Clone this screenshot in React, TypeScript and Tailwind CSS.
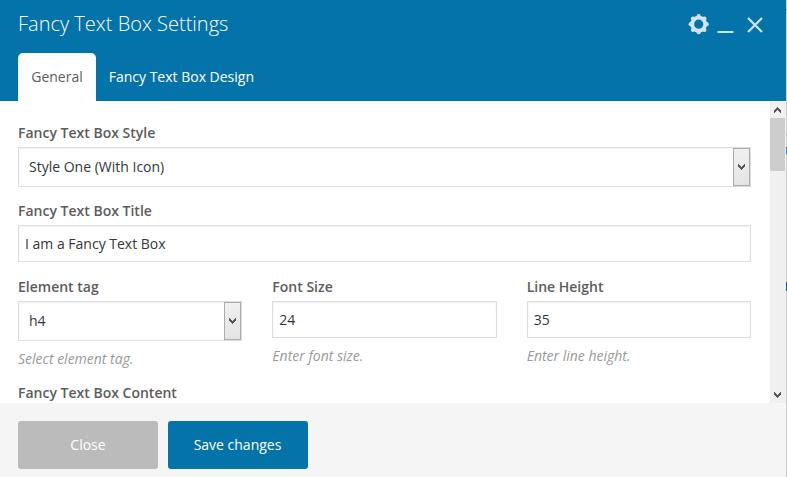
import type { ReactNode } from "react";

function Chevron({ up = false }: { up?: boolean }) {
  return (
    <svg width="7" height="6" viewBox="0 0 7 6" className={up ? "rotate-180" : ""} fill="#585858" shapeRendering="crispEdges">
      <path d="M0 0h1v1h1v1h1v1h1V2h1V1h1V0h1v3H6v1H5v1H4v1H3V5H2V4H1V3H0z" />
    </svg>
  );
}

function Label({ children }: { children: ReactNode }) {
  return <div className="h-[25px] whitespace-nowrap leading-[22px] font-semibold text-[#5c5c5c]">{children}</div>;
}

function Select({ value }: { value: string }) {
  return (
    <div className="flex h-10 items-stretch justify-between border border-[#dddddd] bg-white shadow-[inset_0_1px_2px_rgba(0,0,0,0.07)]">
      <span className="pl-[10px] leading-[38px] text-[#32373c]">{value}</span>
      <span className="flex w-[17px] items-center justify-center border border-[#acacac] bg-linear-to-b from-[#f0f0f0] to-[#e4e4e4]">
        <Chevron />
      </span>
    </div>
  );
}

function Input({ value }: { value: string }) {
  return (
    <div className="h-[37px] border border-[#dddddd] bg-white pl-[6px] leading-[36px] text-[#32373c] shadow-[inset_0_1px_2px_rgba(0,0,0,0.07)]">
      {value}
    </div>
  );
}

function Hint({ children }: { children: ReactNode }) {
  return <div className="mt-[7px] leading-[22px] text-[#999999] italic">{children}</div>;
}

export default function App() {
  return (
    <div className="flex h-[477px] w-[787px] overflow-hidden bg-white font-['Open_Sans',sans-serif] text-[14px]">
      <div className="flex w-[786px] flex-col">
        <header className="flex h-[101px] flex-col justify-between bg-[#0473aa] pl-[18px] text-white">
          <div className="flex h-[48px] justify-between pr-[22px]">
            <h1 className="text-[20px] leading-[48px] font-light">Fancy Text Box Settings</h1>
            <svg width="76" height="22" viewBox="0 0 76 22" className="mt-[13px]" fill="none" stroke="#d0e5f0">
              <circle cx="10.700" cy="11.200" r="6.500" strokeWidth="3.800" />
              <g stroke="none" fill="#d0e5f0">
                <circle cx="10.700" cy="3.200" r="2.100" />
                <circle cx="16.400" cy="5.500" r="2.100" />
                <circle cx="18.700" cy="11.200" r="2.100" />
                <circle cx="16.400" cy="16.900" r="2.100" />
                <circle cx="10.700" cy="19.200" r="2.100" />
                <circle cx="5" cy="16.900" r="2.100" />
                <circle cx="2.700" cy="11.200" r="2.100" />
                <circle cx="5" cy="5.500" r="2.100" />
              </g>
              <path d="M29.500 19h16" strokeWidth="2" />
              <path d="M60 5l14 14M74 5L60 19" strokeWidth="2.200" />
            </svg>
          </div>
          <nav className="flex h-[48px] leading-[48px]">
            <span className="w-[78px] rounded-t-[5px] bg-white text-center text-[#5c5c5c]">General</span>
            <span className="pl-[12.7px]">Fancy Text Box Design</span>
          </nav>
        </header>
        <div className="flex h-[302px] overflow-hidden">
          <main className="w-[770px] pt-[21px] pr-[19px] pl-[18px]">
            <Label>Fancy Text Box Style</Label>
            <Select value="Style One (With Icon)" />
            <div className="mt-[13px]">
              <Label>Fancy Text Box Title</Label>
              <Input value="I am a Fancy Text Box" />
            </div>
            <div className="mt-[14px] grid grid-cols-3 gap-[30px]">
              <div>
                <Label>Element tag</Label>
                <Select value="h4" />
                <Hint>Select element tag.</Hint>
              </div>
              <div>
                <Label>Font Size</Label>
                <Input value="24" />
                <Hint>Enter font size.</Hint>
              </div>
              <div>
                <Label>Line Height</Label>
                <Input value="35" />
                <Hint>Enter line height.</Hint>
              </div>
            </div>
            <div className="mt-[12px]">
              <Label>Fancy Text Box Content</Label>
            </div>
          </main>
          <div className="flex w-4 flex-col bg-[#f0f0f0] pr-px">
            <div className="flex h-[17px] items-center justify-center pt-px">
              <Chevron up />
            </div>
            <div className="h-[53px] bg-[#cdcdcd]" />
            <div className="mt-auto flex h-4 items-center justify-center">
              <Chevron />
            </div>
          </div>
        </div>
        <footer className="flex h-[74px] gap-[10px] bg-[#f5f5f5] pt-[18px] pl-[18px] text-center leading-[48px] text-white">
          <button className="h-[48px] w-[140px] rounded-[3px] bg-[#bbbbbb]">Close</button>
          <button className="h-[48px] w-[140px] rounded-[3px] bg-[#0473aa] pr-px">Save changes</button>
        </footer>
      </div>
      <div className="flex w-px flex-col bg-[#d0d0d0]">
        <div className="mt-[9px] h-px bg-[#aaaaaa]" />
        <div className="mt-[125px] h-px bg-[#a5a5a5]" />
        <div className="mt-[11px] h-[2px] bg-[#6f5a5a]" />
        <div className="h-[4px] bg-[#4a8db5]" />
        <div className="h-px bg-[#6f5a5a]" />
        <div className="mt-[128px] h-[9px] bg-[#35508c]" />
      </div>
    </div>
  );
}
